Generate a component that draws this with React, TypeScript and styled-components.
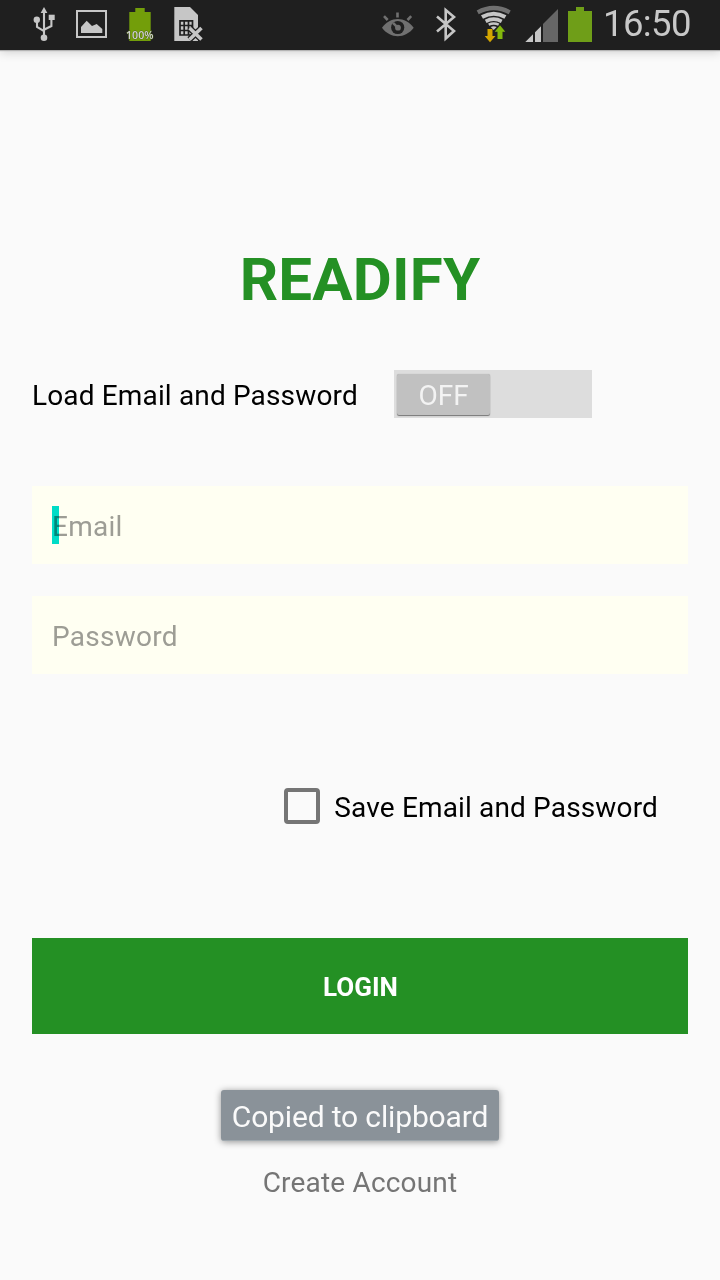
import React from "react";
import styled, { createGlobalStyle } from "styled-components";

const GlobalStyle = createGlobalStyle`
  * { box-sizing: border-box; }
  body { margin: 0; background: #fafafa; font-family: Roboto, sans-serif; }
`;

const Screen = styled.div`
  display: flex;
  flex-direction: column;
  height: 1280px;
  width: 720px;
  overflow: hidden;
  background: #fafafa;
`;

const StatusBar = styled.header`
  display: flex;
  flex: none;
  height: 50px;
  padding: 0 29px 0 28px;
  justify-content: space-between;
  background: #1f1f1f;
  box-shadow: 0 1px 1px #b4b4b4, 0 2px 10px rgba(0, 0, 0, 0.18);
`;

const IconGroup = styled.div`
  display: flex;
  gap: 16px;
`;

const Icon = styled.svg.attrs({ viewBox: "0 0 32 50" })`
  display: block;
  width: 32px;
  height: 50px;
  overflow: visible;
`;

const BatteryIcon = styled.svg.attrs({ viewBox: "0 0 24 50" })`
  display: block;
  width: 24px;
  height: 50px;
  margin-left: -6px;
`;

const Clock = styled.time`
  width: 88px;
  margin-left: -5px;
  color: #c8c8c8;
  font-size: 36.5px;
  line-height: 47px;
  letter-spacing: -0.6px;
  white-space: nowrap;
`;

const Form = styled.main`
  display: flex;
  flex-direction: column;
  padding: 0 32px;
`;

const Title = styled.h1`
  margin: 194px 0 0;
  height: 70px;
  color: #249024;
  font-size: 60px;
  font-weight: 700;
  letter-spacing: 0.2px;
  line-height: 71px;
  text-align: center;
`;

const Label = styled.span`
  padding-top: 3px;
  color: #000;
  font-size: 28px;
  line-height: 34px;
  white-space: nowrap;
  letter-spacing: 0.15px;
`;

const LoadRow = styled.div`
  display: flex;
  align-items: center;
  justify-content: space-between;
  height: 48px;
  margin: 56px 96px 68px 0;
`;

const Switch = styled.div`
  width: 198px;
  height: 48px;
  padding: 4px 3px;
  background: #ddd;
`;

const Thumb = styled.div`
  width: 93px;
  height: 41px;
  border-radius: 2px;
  background: #c1c1c1;
  box-shadow: 0 1px 1px #777, 0 0 1px #aaa;
  color: #f3f3f3;
  font-size: 28px;
  line-height: 43px;
  text-align: center;
`;

const Field = styled.div`
  display: flex;
  align-items: center;
  height: 78px;
  margin-bottom: 32px;
  padding: 2px 20px 0;
  background: #fffff2;
  color: #9d9d95;
  font-size: 28px;
  letter-spacing: 0.25px;
`;

const Placeholder = styled.span`
  position: relative;
`;

const Caret = styled.span`
  position: absolute;
  left: 0;
  top: -4px;
  width: 7px;
  height: 38px;
  background: #00dcd2;
  mix-blend-mode: multiply;
`;

const SaveRow = styled.div`
  display: flex;
  align-items: center;
  justify-content: flex-end;
  gap: 14px;
  height: 36px;
  margin: 82px 30px 114px 0;
`;

const Checkbox = styled.div`
  width: 36px;
  height: 36px;
  border: 4px solid #757575;
  border-radius: 4px;
`;

const LoginButton = styled.button`
  height: 96px;
  padding: 2px 0 0 1px;
  border: 0;
  background: #249024;
  color: #fff;
  font: 700 26px Roboto, sans-serif;
`;

const Toast = styled.div`
  align-self: center;
  width: 278px;
  height: 51px;
  margin-top: 56px;
  border-radius: 3px;
  border-bottom: 1px solid #a0a9af;
  background: #8a9299;
  box-shadow: 0 1px 7px rgba(0, 0, 0, 0.42);
  color: #fafafa;
  font-size: 30px;
  letter-spacing: -0.15px;
  line-height: 54px;
  text-align: center;
  white-space: nowrap;
`;

const CreateAccount = styled.a`
  align-self: center;
  margin-top: 25px;
  color: #757575;
  font-size: 28px;
  letter-spacing: 0.18px;
  line-height: 34px;
`;

const light = "#c6c6c6";
const dark = "#1f1f1f";
const dim = "#707070";

export default function App() {
  return (
    <Screen>
      <GlobalStyle />
      <StatusBar>
        <IconGroup>
          <Icon fill={light}>
            <path d="M16 7l3.4 6h-6.8z" />
            <circle cx="8.8" cy="19.7" r="3.2" />
            <circle cx="16" cy="37.7" r="3.3" />
            <path d="M20.7 14.7h6V20h-6z" />
            <path d="M16 12v25M9 21v6l7 4.2M23.4 19v7L16 29.8" fill="none" stroke={light} strokeWidth="2.1" />
          </Icon>
          <Icon fill={light}>
            <path d="M1 11h29v26H1z" fill="none" stroke={light} strokeWidth="2" />
            <path d="M5 33v-6l5.7-6.3L16 26l4.7-2 5.6 5v4z" />
          </Icon>
          <Icon>
            <path d="M5.3 12h6V8h9.4v4h6v29H5.3z" fill="#739e0a" />
            <text x="2" y="39" fontSize="10.5" fontFamily="Open Sans, sans-serif" fontWeight="600" fill="#d0d0d0" stroke="#4b6414" strokeWidth=".8" paintOrder="stroke" textLength="27.5" lengthAdjust="spacingAndGlyphs">100%</text>
          </Icon>
          <Icon fill={light}>
            <path d="M2.3 7H18l8 8v26H2.3z" />
            <path d="M8 20.8h12.5V35H8zM12.2 20.8V35M16.5 20.8V35M8 25.5h12.5M8 30.5h12.5" fill="none" stroke={dark} strokeWidth="1.7" />
            <path d="M17.5 28l12 11.5M29.5 28l-12 11.5" stroke={dark} strokeWidth="6" />
            <path d="M17.5 28l12 11.5M29.5 28l-12 11.5" stroke={light} strokeWidth="3.6" />
          </Icon>
        </IconGroup>
        <IconGroup>
          <Icon fill={dim}>
            <path d="M0 27.8C8 16 23.5 16 31.700 27.800C23.500 39 8 39 0 27.800z" />
            <circle cx="15.700" cy="27.500" r="6.600" fill={dark} />
            <path d="M11 22.800l4.500 4.500" stroke={dim} strokeWidth="2.600" />
            <circle cx="16" cy="27.700" r="2.900" />
            <path d="M15.500 12.500V17.500M2 16.200l3.700 3.800M29.200 16.200l-3.700 3.800" stroke={dim} strokeWidth="2.600" />
          </Icon>
          <Icon>
            <path d="M7 16.500L24 31l-8.300 7.500V10L24 17 7 31.500" fill="none" stroke={light} strokeWidth="2.600" />
          </Icon>
          <Icon>
            <g fill="none" stroke={light} strokeWidth="4">
              <path d="M-.3 12.300Q15.700 3.700 31.700 12.300" stroke={dim} strokeWidth="4.300" />
              <path d="M4 17Q15.700 10.300 27.400 17" />
              <path d="M7.700 21.300Q15.700 17 23.700 21.300" strokeWidth="3.600" />
              <path d="M10.700 24.700Q15.700 22.300 20.700 24.700" strokeWidth="2.600" />
            </g>
            <path d="M12.700 27q3-1.600 6 0l-3 3z" fill={light} />
            <path d="M9.500 29h5v7h3L12 42.300 6.700 36h2.800z" fill="#d3a500" />
            <path d="M22 25.300l5.300 6.500h-2.800V39h-5v-7.200h-2.800z" fill="#83b80c" />
          </Icon>
          <Icon>
            <path d="M-.7 42L7 34.300V42zM9 32.300l6-6V42H9z" fill={light} />
            <path d="M17 24L32 9v33H17z" fill="#666" />
          </Icon>
          <BatteryIcon>
            <path d="M0 11h8V7h8v4h8v31H0z" fill="#6f9e18" />
          </BatteryIcon>
          <Clock>16:50</Clock>
        </IconGroup>
      </StatusBar>
      <Form>
        <Title>READIFY</Title>
        <LoadRow>
          <Label>Load Email and Password</Label>
          <Switch>
            <Thumb>OFF</Thumb>
          </Switch>
        </LoadRow>
        <Field>
          <Placeholder>
            Email
            <Caret />
          </Placeholder>
        </Field>
        <Field>
          <Placeholder>Password</Placeholder>
        </Field>
        <SaveRow>
          <Checkbox />
          <Label>Save Email and Password</Label>
        </SaveRow>
        <LoginButton>LOGIN</LoginButton>
        <Toast>Copied to clipboard</Toast>
        <CreateAccount>Create Account</CreateAccount>
      </Form>
    </Screen>
  );
}
